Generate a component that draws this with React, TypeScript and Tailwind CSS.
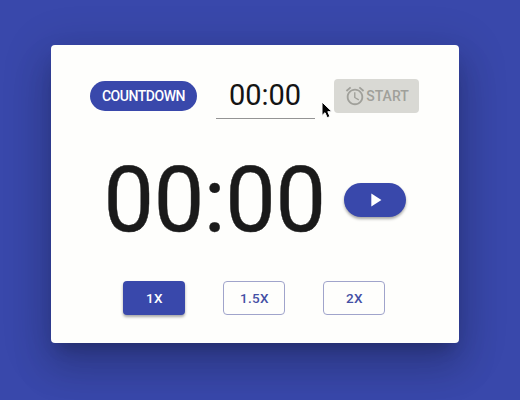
import React from "react";

function AlarmIcon() {
  return (
    <svg viewBox="0 0 24 24" className="size-[22px] shrink-0" fill="currentColor">
      <path d="M22 5.72l-4.6-3.86-1.29 1.53 4.6 3.86L22 5.72zM7.88 3.39L6.6 1.86 2 5.71l1.29 1.53 4.59-3.85zM12.5 8H11v6l4.75 2.85.75-1.23-4-2.37V8zM12 4c-4.97 0-9 4.03-9 9s4.02 9 9 9c4.97 0 9-4.03 9-9s-4.03-9-9-9zm0 16c-3.87 0-7-3.13-7-7s3.13-7 7-7 7 3.13 7 7-3.13 7-7 7z" />
    </svg>
  );
}

function Cursor() {
  return (
    <svg viewBox="0 0 12 18" className="absolute left-[321px] top-[101px] h-[18px] w-[12px]">
      <path
        d="M1 1V14.5L4 11.7L6.2 16.7L8.9 15.5L6.8 10.7H11Z"
        fill="#000"
        stroke="#fff"
        strokeWidth="1"
      />
    </svg>
  );
}

const speeds = ["1X", "1.5X", "2X"];

export default function App() {
  const active = "1X";
  return (
    <div className="relative h-[400px] w-[520px] overflow-hidden bg-[#3948ab] pl-[51px] pt-[45px] font-['Roboto',sans-serif]">
      <main className="flex h-[298px] w-[408px] flex-col rounded-[4px] bg-[#fefefc] pt-7 shadow-[0_11px_15px_-7px_rgba(0,0,0,0.2),0_24px_38px_3px_rgba(0,0,0,0.14),0_9px_46px_8px_rgba(0,0,0,0.12)]">
        <div className="flex h-[46px] items-center pl-[39px]">
          <div className="flex h-[30px] w-[107px] items-center justify-center rounded-full bg-[#3948ab] text-[14px] text-white">
            <span className="font-medium tracking-[-0.45px]">COUNTDOWN</span>
          </div>
          <div className="ml-[19px] flex h-[46px] w-[99px] items-center justify-center border-b border-[#949494] pr-px text-[29px] leading-none text-[#141414]">
            00:00
          </div>
          <button
            disabled
            className="ml-[19px] flex h-[34px] w-[85px] items-center justify-center rounded-[4px] bg-[#d9d9d4] text-[14px] font-medium text-[#a0a09a]"
          >
            <AlarmIcon />
            <span className="tracking-[0px]">START</span>
          </button>
        </div>
        <div className="mt-[29px] flex h-[104px] items-center pl-[52.5px]">
          <div className="w-[220.5px] whitespace-nowrap pt-px text-[90px] leading-none tracking-[-0.4px] text-[#1a1a1a] [-webkit-text-stroke:0.4px_#1a1a1a]">
            00:00
          </div>
          <button className="ml-5 flex h-[34px] w-[62px] items-center justify-center rounded-full bg-[#3948ab] text-white shadow-[0_2px_3px_rgba(0,0,0,0.35)]">
            <svg viewBox="0 0 24 24" className="size-[22px]" fill="currentColor">
              <path d="M8 5v14l11-7z" />
            </svg>
          </button>
        </div>
        <div className="mt-[29px] flex gap-[38px] pl-[72.4px]">
          {speeds.map((s) => (
            <button
              key={s}
              className={
                s === active
                  ? "h-[34px] w-[62px] rounded-[4px] bg-[#3948ab] text-[13.5px] font-medium tracking-[0.3px] text-white shadow-[0_2px_3px_rgba(0,0,0,0.35)]"
                  : "h-[34px] w-[62px] rounded-[4px] border border-[#a0a4cb] text-[13.5px] font-medium tracking-[0.3px] text-[#4450a5]"
              }
            >
              {s}
            </button>
          ))}
        </div>
      </main>
      <Cursor />
    </div>
  );
}
